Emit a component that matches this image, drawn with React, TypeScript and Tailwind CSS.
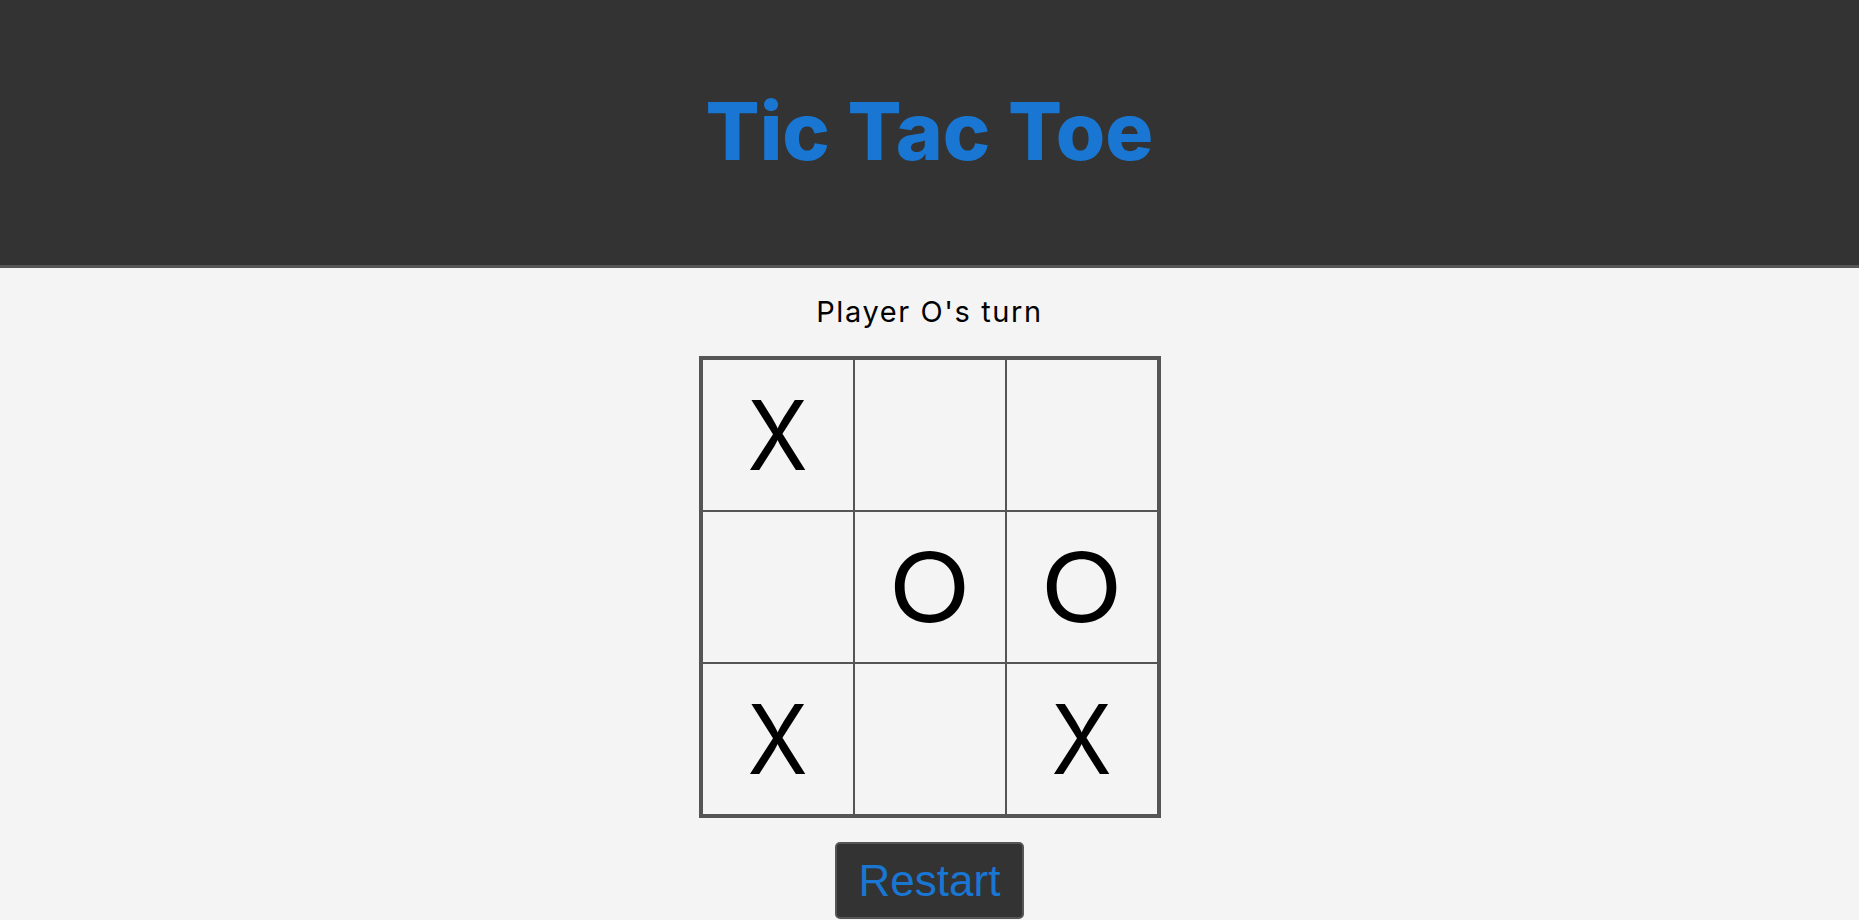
import React from "react";

const board = ["X", "", "", "", "O", "O", "X", "", "X"];

export default function App() {
  return (
    <div className="min-h-screen bg-[#f4f4f4] flex flex-col items-center font-[family-name:Inter,'Noto_Sans',sans-serif]">
      <header className="w-full h-[268px] bg-[#333333] border-b-[3px] border-[#555555] flex justify-center">
        <h1 className="pt-[91px] text-[80px] leading-[80px] font-extrabold text-[#1976d2]">
          Tic Tac Toe
        </h1>
      </header>
      <p className="mt-[30px] text-[29px] leading-[28px] text-black tracking-[1.6px]">
        Player O's turn
      </p>
      <div className="mt-[30px] border-[3px] border-[#555555] grid grid-cols-3">
        {board.map((v, i) => (
          <div
            key={i}
            className="w-[152px] h-[152px] border border-[#555555] flex items-center justify-center text-[96px] leading-none text-black"
          >
            {v === "O" ? <span className="inline-block scale-x-[1.12]">O</span> : v === "X" ? <span className="inline-block scale-x-[0.92]">X</span> : v}
          </div>
        ))}
      </div>
      <button className="mt-[24px] bg-[#333333] border-2 border-[#555555] rounded-[5px] px-[22px] py-[11.5px] text-[44px] leading-[normal] text-[#1976d2] font-[family-name:'Liberation_Sans',Arial,sans-serif]">
        Restart
      </button>
    </div>
  );
}
